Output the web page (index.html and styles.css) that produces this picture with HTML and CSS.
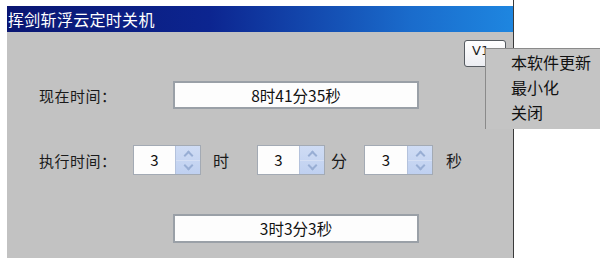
FILE: index.html
```html
<!DOCTYPE html>
<html lang="zh-CN">
<head>
<meta charset="utf-8">
<title>挥剑斩浮云定时关机</title>
<link rel="stylesheet" href="styles.css">
</head>
<body>
<div class="screen">
  <div class="window">
    <div class="titlebar">挥剑斩浮云定时关机</div>
    <div class="client">
      <div class="row row-now">
        <span class="label">现在时间：</span>
        <div class="field wide">8时41分35秒</div>
      </div>
      <div class="row row-exec">
        <span class="label short">执行时间：</span>
        <div class="spinner">
          <div class="spin-text">3</div>
          <div class="spin-btns"><span class="up"></span><span class="down"></span></div>
        </div>
        <span class="unit u-h">时</span>
        <div class="spinner">
          <div class="spin-text">3</div>
          <div class="spin-btns"><span class="up"></span><span class="down"></span></div>
        </div>
        <span class="unit u-m">分</span>
        <div class="spinner s3">
          <div class="spin-text">3</div>
          <div class="spin-btns"><span class="up"></span><span class="down"></span></div>
        </div>
        <span class="unit u-s">秒</span>
      </div>
      <div class="row row-result">
        <span class="label"></span>
        <div class="field wide result">3时3分3秒</div>
      </div>
    </div>
    <div class="ver">V1</div>
  </div>
  <div class="menu">
    <div class="item">本软件更新</div>
    <div class="item">最小化</div>
    <div class="item">关闭</div>
  </div>
</div>
</body>
</html>
```
FILE: styles.css
```css
* { box-sizing: border-box; }
html, body { margin: 0; padding: 0; background: #fff; }
body {
  font-family: "Noto Sans CJK SC", "Noto Sans", sans-serif;
  color: #111;
  width: 600px;
  height: 258px;
  overflow: hidden;
}
.screen { position: relative; width: 600px; height: 258px; }
.window {
  position: relative;
  margin-left: 7px;
  width: 507px;
  height: 258px;
  padding-top: 6px;
  border-right: 1px solid #3a3a3a;
}
.titlebar {
  height: 26px;
  background: linear-gradient(to right, #0a1672 0%, #0c2590 40%, #1a6ccc 80%, #1e86e0 100%);
  color: #fff;
  font-size: 16px;
  line-height: 26px;
  padding-left: 1px;
  letter-spacing: 0.3px;
}
.client {
  background: #c2c2c2;
  height: 226px;
  padding-top: 49px;
  padding-left: 32px;
}
.row { display: flex; align-items: center; }
.label {
  width: 134px;
  font-size: 15px;
  color: #1a1a1a;
  letter-spacing: 0.5px;
}
.label.short { width: 94px; }
.field {
  background: #fdfdfd;
  border: 2px solid #9aa0a7;
  font-size: 15.5px;
  text-align: center;
  color: #111;
}
.wide { width: 246px; height: 28px; line-height: 24px; }
.row-exec { margin-top: 36px; height: 30px; }
.row-result { margin-top: 39px; }
.result { height: 29px; line-height: 25px; }
.spinner {
  display: flex;
  width: 68px;
  height: 30px;
  border: 1px solid #a3aab4;
}
.spinner.s3 { width: 69px; }
.spin-text {
  flex: 1;
  background: #fdfdfd;
  font-size: 15px;
  text-align: center;
  line-height: 28px;
}
.spin-btns {
  width: 25px;
  display: flex;
  flex-direction: column;
  background: linear-gradient(#cfdcf4, #bfd0f0);
  border-left: 1px solid #b4c2dc;
}
.spin-btns span {
  flex: 1;
  position: relative;
}
.spin-btns .up { border-bottom: 1px solid #d6e0f4; }
.spin-btns span::after {
  content: "";
  position: absolute;
  left: 9px;
  width: 5px;
  height: 5px;
  border-left: 2px solid #98aed4;
  border-top: 2px solid #98aed4;
}
.spin-btns .up::after { top: 6px; transform: rotate(45deg); }
.spin-btns .down::after { top: 1px; transform: rotate(225deg); }
.unit { font-size: 16px; color: #1a1a1a; }
.u-h { width: 56px; padding-left: 12px; }
.u-m { width: 39px; padding-left: 6px; }
.u-s { padding-left: 13px; }
.ver {
  position: absolute;
  left: 457px;
  top: 40px;
  width: 42px;
  height: 27px;
  border: 1px solid #555a60;
  border-radius: 3px;
  background: linear-gradient(#ffffff, #ecedf2);
  font-family: "DejaVu Sans", sans-serif;
  font-size: 13px;
  padding-left: 7px;
  line-height: 20px;
  color: #222;
}
.menu {
  position: absolute;
  left: 485px;
  top: 48px;
  width: 115px;
  height: 81px;
  background: #c4c4c4;
  border-left: 1px solid #8a8a8a;
  border-top: 1px solid #8a8a8a;
  padding-top: 1px;
  padding-left: 25px;
}
.menu .item {
  font-size: 16px;
  line-height: 25px;
  color: #111;
  white-space: nowrap;
}
```
